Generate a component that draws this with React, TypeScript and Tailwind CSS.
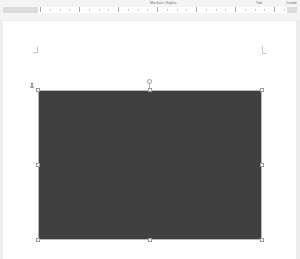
import React from "react";

const ticks = Array.from({ length: 26 }, (_, i) => i);

function Handle({ className }: { className: string }) {
  return <div className={`absolute w-[4px] h-[4px] bg-white border border-[#9a9a9a] ${className}`} />;
}

export default function App() {
  return (
    <div className="w-[300px] h-[259px] bg-[#ececec] overflow-hidden flex flex-col font-['Liberation_Sans',sans-serif]">
      {/* ruler */}
      <div className="h-[20px] shrink-0 bg-[#f4f4f4] flex flex-col px-[3px] pt-[1px]">
        <div className="h-[6px] flex text-[4px] leading-none text-[#777]">
          <span className="ml-[147px]">Markers Styles</span>
          <span className="ml-auto">Tab</span>
          <span className="ml-[24px]">Inside</span>
        </div>
        <div className="h-[6px] bg-white flex">
          <div className="w-[35px] h-full bg-[#dcdcdc]" />
          <div className="flex-1 flex justify-between px-[2px]">
            {ticks.map((t) => (
              <div key={t} className={`w-px ${t % 4 === 0 ? "h-[5px] bg-[#aaa]" : "h-[2px] mt-[2px] bg-[#ccc]"}`} />
            ))}
          </div>
          <div className="w-[10px] h-full bg-[#dcdcdc]" />
        </div>
      </div>
      {/* page */}
      <div className="ml-[3px] mt-[1px] w-[293px] flex-1 bg-white flex flex-col pl-[26px] pr-[29px] pt-[25px]">
        <div className="flex justify-between pl-[4px]">
          <div className="w-[5px] h-[7px] border-r border-b border-[#c8c8c8]" />
          <div className="w-[5px] h-[8px] border-l border-b border-[#c8c8c8]" />
        </div>
        <div className="flex mt-[29px]">
          <svg width="6" height="7" viewBox="0 0 6 7" className="shrink-0 -mt-[1px] mr-[3px]">
            <path d="M3 0.5 V6 M1 4.5 Q3 6.5 5 4.5 M2 2 H4" stroke="#666" strokeWidth="0.9" fill="none" />
          </svg>
          <div className="relative mt-[7px] w-[224px] h-[150px] bg-[#404040] border border-[#b8b8b8]">
            <Handle className="-left-[3px] -top-[3px]" />
            <Handle className="left-[109px] -top-[3px]" />
            <Handle className="-right-[3px] -top-[3px]" />
            <Handle className="-left-[3px] top-[72px]" />
            <Handle className="-right-[3px] top-[72px]" />
            <Handle className="-left-[3px] -bottom-[3px]" />
            <Handle className="left-[109px] -bottom-[3px]" />
            <Handle className="-right-[3px] -bottom-[3px]" />
            <div className="absolute left-[110px] -top-[10px] w-px h-[7px] bg-[#b0b0b0]" />
            <div className="absolute left-[108px] -top-[12px] w-[5px] h-[5px] rounded-full bg-white border border-[#9a9a9a]" />
          </div>
        </div>
      </div>
    </div>
  );
}
